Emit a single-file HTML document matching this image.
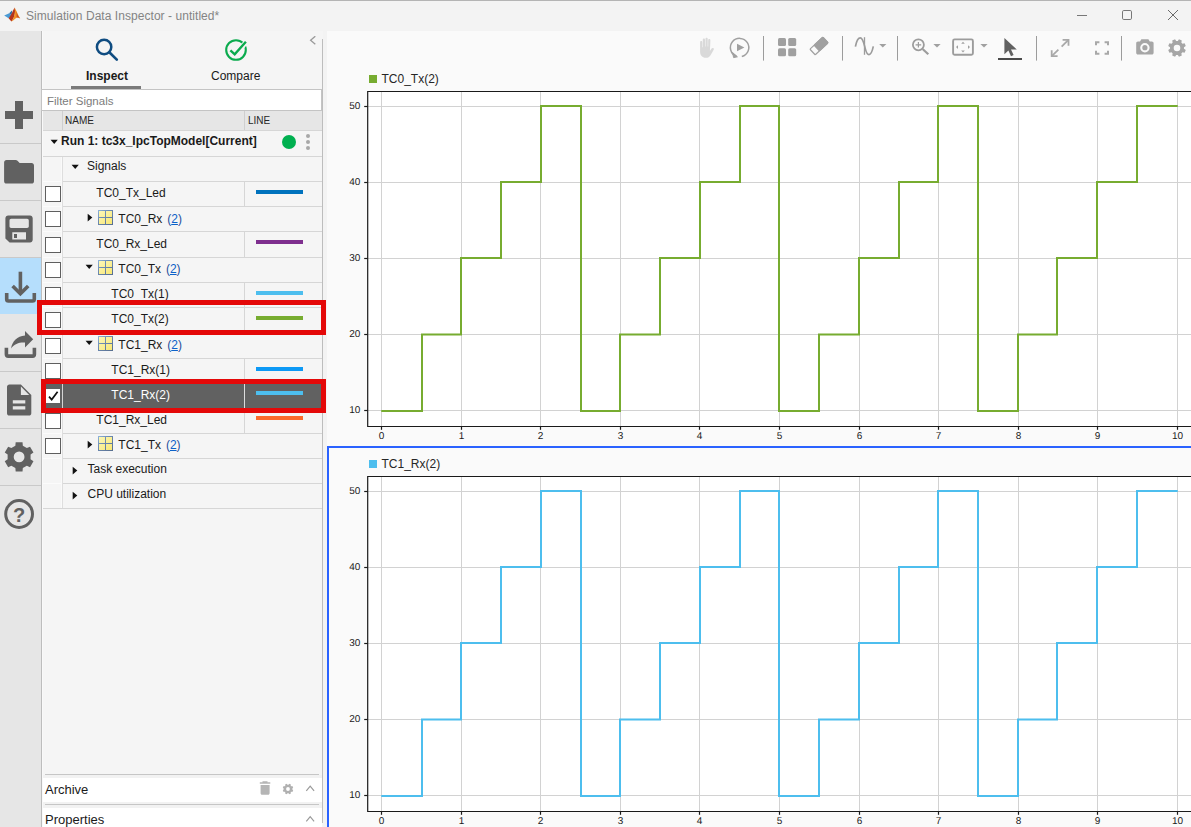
<!DOCTYPE html>
<html lang="en">
<head>
<meta charset="utf-8">
<title>Simulation Data Inspector - untitled*</title>
<style>
html,body{margin:0;padding:0;}
body{width:1191px;height:827px;overflow:hidden;position:relative;background:#fafafa;font-family:"Liberation Sans",Arial,sans-serif;font-size:12px;color:#1a1a1a;}
.abs{position:absolute;}
#titlebar{left:0;top:0;width:1191px;height:31px;background:#f3f3f3;}
#topline{left:0;top:0;width:1191px;height:1px;background:#b4b4b4;}
#title{left:26px;top:9px;font-size:12px;line-height:15px;color:#848484;white-space:nowrap;letter-spacing:0.050px;}
#sidebar{left:0;top:31px;width:41px;height:796px;background:#e6e6e6;}
.sbsep{left:0;width:41px;height:1px;background:#c9c9c9;}
#sbsel{left:0;top:258px;width:41px;height:56px;background:#b5defc;}
#panel{left:42px;top:31px;width:281px;height:796px;background:#f5f5f5;}
#pl{left:41px;top:31px;width:1px;height:796px;background:#bdbdbd;}
#pl2{left:42px;top:31px;width:1px;height:796px;background:#f9f9f9;}
#pr{left:322px;top:39px;width:1px;height:784px;background:#bdbdbd;}
#gap{left:323px;top:31px;width:4px;height:796px;background:#f3f3f3;}
.tab{font-size:12px;line-height:14px;white-space:nowrap;color:#1a1a1a;}
#filter{left:41px;top:89px;width:279px;height:20px;border:1px solid #c4c4c4;background:#fff;}
#filter span{position:absolute;left:5px;top:4px;font-size:11.500px;line-height:14px;color:#7c7c7c;}
#hdr{left:43px;top:111px;width:279px;height:19px;background:#e6e6e6;}
.hl{height:1px;background:#d6d6d6;}
.vl{width:1px;background:#d6d6d6;}
.rt{font-size:12px;line-height:14px;white-space:nowrap;color:#1a1a1a;}
.cb{left:45px;width:14px;height:14px;border:1px solid #5f5f5f;background:#fff;}
.ln{left:256px;width:47px;height:4px;}
.lnk{color:#1f4e9c;}
.lnk u{color:#0b61c9;}
.gi{left:0;top:0;}
.tk{font-family:"Liberation Sans",Arial,sans-serif;font-size:10px;fill:#1a1a1a;text-rendering:geometricPrecision;}
.lg{font-family:"Liberation Sans",Arial,sans-serif;font-size:12px;fill:#262626;}
.red{border:5px solid #e40808;box-sizing:border-box;}
.hd10{font-size:10px;line-height:12px;color:#262626;}
.sec{font-size:13px;line-height:15px;color:#1a1a1a;}
</style>
</head>
<body>
<!-- title bar -->
<div id="titlebar" class="abs"></div>
<div id="topline" class="abs"></div>
<svg class="abs" style="left:4px;top:7px" width="17" height="16" viewBox="0 0 17 16">
  <path d="M0.2 8.6 L5.2 6.3 L7.6 8.4 L4.6 11.2 Z" fill="#4a9ad4"/>
  <path d="M5.2 6.3 L8.2 3.2 L7.6 8.4 Z" fill="#2c6fa8"/>
  <path d="M4.6 11.2 C7.2 8.6 8.6 4.2 10.6 0.6 C11.2 3.6 11.8 9.2 7.4 14.6 Z" fill="#b5351c"/>
  <path d="M10.6 0.6 C12.4 3.2 14 8.6 16.2 11.4 C14.6 10.6 13.4 10.2 12.2 11 C10.8 12 9.4 13.6 7.4 14.6 C11 10 11.4 4.6 10.6 0.6 Z" fill="#f29222"/>
  <path d="M12.2 4 C13.2 7 14.4 9.6 16.2 11.4 C14.8 10.6 13.6 10.2 12.6 10.6 C12.8 8.4 12.6 6 12.2 4 Z" fill="#c8502a"/>
</svg>
<div id="title" class="abs">Simulation Data Inspector - untitled*</div>
<svg class="abs" style="left:1070px;top:4px" width="121" height="24" viewBox="0 0 121 24">
  <path d="M7 11.5H17" stroke="#777" stroke-width="1" fill="none"/>
  <rect x="52.5" y="6.5" width="9" height="9" rx="1.3" fill="none" stroke="#777" stroke-width="1"/>
  <path d="M98 6L108 16M108 6L98 16" stroke="#6a6a6a" stroke-width="1" fill="none"/>
</svg>

<!-- sidebar -->
<div id="sidebar" class="abs"></div>
<div id="sbsel" class="abs"></div>
<div class="abs sbsep" style="top:143px"></div>
<div class="abs sbsep" style="top:200px"></div>
<div class="abs sbsep" style="top:257px"></div>
<div class="abs sbsep" style="top:371px"></div>
<div class="abs sbsep" style="top:428px"></div>
<div class="abs sbsep" style="top:485px"></div>
<svg class="abs" style="left:0;top:86px" width="41" height="470" viewBox="0 86 41 470">
  <g fill="#616161">
  <!-- plus -->
  <rect x="5" y="111" width="28" height="8"/><rect x="15" y="101" width="8" height="28"/>
  <!-- folder -->
  <path d="M6.5 160H15.6C16.4 160 17 160.3 17.5 160.8L19.6 163H31.6C33 163 34 164 34 165.4V181.2C34 182.6 33 183.6 31.6 183.6H6.5C5.1 183.6 4.1 182.6 4.1 181.2V162.4C4.1 161 5.1 160 6.5 160Z"/>
  <!-- save -->
  <path fill-rule="evenodd" d="M8.2 215.5H30C31.5 215.500 32.700 216.700 32.700 218.200V239.800C32.700 241.300 31.500 242.500 30 242.500H9.6L5.400 238.500V218.200C5.400 216.700 6.600 215.500 8.200 215.500ZM11.200 218.800C10.200 218.800 9.500 219.500 9.500 220.500V226.200C9.500 227.200 10.200 227.900 11.200 227.900H27.100C28.100 227.900 28.800 227.200 28.800 226.200V220.500C28.800 219.500 28.100 218.800 27.100 218.800ZM12.300 232.300V239.400H26V232.300ZM14 234H17V237.900H14Z"/>
  <!-- doc -->
  <path fill-rule="evenodd" d="M9.400 384.400H20.900L31.300 395V413.200C31.300 414.600 30.300 415.600 28.900 415.600H9.400C8 415.600 7 414.600 7 413.200V386.800C7 385.400 8 384.400 9.400 384.400ZM20.900 386.600V395H29.200ZM12.800 400.200V403.400H25.300V400.200ZM12.800 406.200V409.600H25.300V406.200Z"/>
  </g>
  <!-- download -->
  <g fill="none" stroke="#616161" stroke-width="3.6">
   <path d="M20.400 271.700V293"/>
   <path d="M12.600 286L20.400 293.800L28.200 286" stroke-linejoin="miter"/>
   <path d="M6.700 293V299.200C6.700 300.300 7.500 301 8.500 301H32.500C33.500 301 34.300 300.300 34.300 299.200V293"/>
   <!-- share tray -->
   <path d="M6.400 347.700V354.300C6.400 355.400 7.200 356.100 8.200 356.100H32.600C33.600 356.100 34.400 355.400 34.400 354.300V347.700"/>
  </g>
  <!-- share arrow -->
  <path fill="#616161" d="M25 331L33.200 339.200L25 347.400V342.600C19 342.200 14.600 344 11 348.600C12.400 341.200 17 336.400 25 335.600Z"/>
  <!-- gear -->
  <g transform="translate(19.100 456.900)">
   <path fill="#616161" fill-rule="evenodd" d="M3.73 11.09 L3.43 14.60 L-3.43 14.60 L-3.73 11.09 L-7.74 8.78 L-10.93 10.27 L-14.36 4.34 L-11.47 2.31 L-11.47 -2.31 L-14.36 -4.34 L-10.93 -10.27 L-7.74 -8.78 L-3.73 -11.09 L-3.43 -14.60 L3.43 -14.60 L3.73 -11.09 L7.74 -8.78 L10.93 -10.27 L14.36 -4.34 L11.47 -2.31 L11.47 2.31 L14.36 4.34 L10.93 10.27 L7.74 8.78Z M5.40 0A5.40 5.40 0 1 0 -5.40 0A5.40 5.40 0 1 0 5.40 0Z"/>
  </g>
  <!-- help -->
  <circle cx="19.100" cy="514" r="13.400" fill="none" stroke="#616161" stroke-width="3"/>
  <text x="19.100" y="521.500" text-anchor="middle" font-family="Liberation Sans,Arial,sans-serif" font-weight="bold" font-size="20" fill="#616161">?</text>
</svg>

<!-- panel -->
<div id="panel" class="abs"></div>
<div id="gap" class="abs"></div>
<div id="pl" class="abs"></div>
<div id="pl2" class="abs"></div>
<div id="pr" class="abs"></div>
<svg class="abs" style="left:90px;top:36px" width="240" height="30" viewBox="90 36 240 30">
  <circle cx="104.100" cy="47" r="7.200" fill="none" stroke="#0f4c81" stroke-width="2.500"/>
  <path d="M109.300 52.200L116.800 59.600" stroke="#0f4c81" stroke-width="2.700" stroke-linecap="round" fill="none"/>
  <circle cx="236" cy="50" r="9.800" fill="none" stroke="#0bab4e" stroke-width="2.100"/>
  <path d="M239 50.500L246.800 41.200" stroke="#f5f5f5" stroke-width="5" fill="none"/>
  <path d="M230.400 50.400L234.700 54.300L245.900 41.700" stroke="#0bab4e" stroke-width="2.400" fill="none"/>
  <path d="M315.300 36.200L310.600 40.200L315.300 44.200" stroke="#9a9a9a" stroke-width="1.300" fill="none"/>
</svg>
<div class="abs tab" style="left:86px;top:69px;font-weight:bold">Inspect</div>
<div class="abs tab" style="left:211px;top:69px">Compare</div>
<div class="abs" style="left:71px;top:86px;width:70px;height:3px;background:#7a7a7a"></div>
<div id="filter" class="abs"><span>Filter Signals</span></div>
<div id="hdr" class="abs"></div>
<div class="abs vl" style="left:62px;top:111px;height:19px;background:#cfcfcf"></div>
<div class="abs vl" style="left:244px;top:111px;height:19px;background:#cfcfcf"></div>
<div class="abs hd10" style="left:65px;top:115px">NAME</div>
<div class="abs hd10" style="left:248px;top:115px">LINE</div>
<svg width="0" height="0" style="position:absolute"><defs><linearGradient id="gg" gradientUnits="userSpaceOnUse" x1="0" y1="0" x2="15" y2="15"><stop offset="0" stop-color="#fdf8bc"/><stop offset="1" stop-color="#f8e670"/></linearGradient><linearGradient id="gb" x1="0" y1="0" x2="1" y2="1"><stop offset="0" stop-color="#8fb4dc"/><stop offset="0.350" stop-color="#6f8db4"/><stop offset="1" stop-color="#566d8e"/></linearGradient><symbol id="gi" viewBox="0 0 16 16"><rect x="0" y="0" width="15" height="15" fill="url(#gb)"/><rect x="1" y="1" width="6" height="6" fill="url(#gg)"/><rect x="8" y="1" width="6" height="6" fill="url(#gg)"/><rect x="1" y="8" width="6" height="6" fill="url(#gg)"/><rect x="8" y="8" width="6" height="6" fill="url(#gg)"/></symbol><symbol id="ad" viewBox="0 0 9 6"><path d="M0.600 0.800H7.800L4.200 5Z" fill="#111"/></symbol><symbol id="ar" viewBox="0 0 6 10"><path d="M0.700 0.800V8.400L5.300 4.600Z" fill="#111"/></symbol></defs></svg>
<div class="abs" style="left:43px;top:384px;width:279px;height:24px;background:#616161"></div>
<div class="abs hl" style="left:43px;top:130px;width:279px"></div>
<div class="abs hl" style="left:43px;top:156px;width:279px"></div>
<div class="abs hl" style="left:43px;top:181px;width:19px;background:#fbfbfb"></div>
<div class="abs hl" style="left:62px;top:181px;width:260px"></div>
<div class="abs hl" style="left:43px;top:206px;width:19px;background:#fbfbfb"></div>
<div class="abs hl" style="left:62px;top:206px;width:260px"></div>
<div class="abs hl" style="left:43px;top:231px;width:19px;background:#fbfbfb"></div>
<div class="abs hl" style="left:62px;top:231px;width:260px"></div>
<div class="abs hl" style="left:43px;top:257px;width:19px;background:#fbfbfb"></div>
<div class="abs hl" style="left:62px;top:257px;width:260px"></div>
<div class="abs hl" style="left:43px;top:282px;width:19px;background:#fbfbfb"></div>
<div class="abs hl" style="left:62px;top:282px;width:260px"></div>
<div class="abs hl" style="left:43px;top:307px;width:19px;background:#fbfbfb"></div>
<div class="abs hl" style="left:62px;top:307px;width:260px"></div>
<div class="abs hl" style="left:43px;top:332px;width:19px;background:#fbfbfb"></div>
<div class="abs hl" style="left:62px;top:332px;width:260px"></div>
<div class="abs hl" style="left:43px;top:358px;width:19px;background:#fbfbfb"></div>
<div class="abs hl" style="left:62px;top:358px;width:260px"></div>
<div class="abs hl" style="left:43px;top:383px;width:19px;background:#fbfbfb"></div>
<div class="abs hl" style="left:62px;top:383px;width:260px"></div>
<div class="abs hl" style="left:43px;top:408px;width:19px;background:#fbfbfb"></div>
<div class="abs hl" style="left:62px;top:408px;width:260px"></div>
<div class="abs hl" style="left:43px;top:433px;width:19px;background:#fbfbfb"></div>
<div class="abs hl" style="left:62px;top:433px;width:260px"></div>
<div class="abs hl" style="left:43px;top:458px;width:19px;background:#fbfbfb"></div>
<div class="abs hl" style="left:62px;top:458px;width:260px"></div>
<div class="abs hl" style="left:43px;top:483px;width:19px;background:#fbfbfb"></div>
<div class="abs hl" style="left:62px;top:483px;width:260px"></div>
<div class="abs hl" style="left:43px;top:508px;width:279px"></div>
<div class="abs vl" style="left:61px;top:157px;height:351px;background:#fafafa"></div>
<div class="abs vl" style="left:62px;top:157px;height:351px;background:#dedede"></div>
<div class="abs vl" style="left:61px;top:384px;height:24px;background:#616161"></div>
<div class="abs vl" style="left:62px;top:384px;height:24px;background:#d4d4d4"></div>
<svg class="abs" style="left:49.5px;top:139px" width="9" height="6"><use href="#ad"/></svg>
<div class="abs rt" style="left:61px;top:134px;font-weight:bold">Run 1: tc3x_IpcTopModel[Current]</div>
<div class="abs" style="left:282px;top:135px;width:14px;height:14px;border-radius:7px;background:#00b050"></div>
<div class="abs" style="left:306px;top:134px;width:4px;height:4px;border-radius:2px;background:#a8a8a8"></div>
<div class="abs" style="left:306px;top:140px;width:4px;height:4px;border-radius:2px;background:#a8a8a8"></div>
<div class="abs" style="left:306px;top:146px;width:4px;height:4px;border-radius:2px;background:#a8a8a8"></div>
<svg class="abs" style="left:70.6px;top:164px" width="9" height="6"><use href="#ad"/></svg>
<div class="abs rt" style="left:87px;top:159px;">Signals</div>
<div class="abs cb" style="top:186px"></div>
<div class="abs rt" style="left:96.3px;top:186px;">TC0_Tx_Led</div>
<div class="abs ln" style="top:190px;background:#0072bd"></div>
<div class="abs vl" style="left:244px;top:182px;height:24px"></div>
<div class="abs cb" style="top:211px"></div>
<svg class="abs" style="left:86.8px;top:213px" width="6" height="10"><use href="#ar"/></svg>
<svg class="abs" style="left:98px;top:210px" width="16" height="16"><use href="#gi"/></svg>
<div class="abs rt" style="left:118.3px;top:212px;">TC0_Rx&nbsp;<span class="lnk" style="margin-left:1.600px">(<u>2</u>)</span></div>
<div class="abs cb" style="top:237px"></div>
<div class="abs rt" style="left:96.3px;top:237px;">TC0_Rx_Led</div>
<div class="abs ln" style="top:240px;background:#7e2f8e"></div>
<div class="abs vl" style="left:244px;top:232px;height:25px"></div>
<div class="abs cb" style="top:262px"></div>
<svg class="abs" style="left:85.4px;top:264px" width="9" height="6"><use href="#ad"/></svg>
<svg class="abs" style="left:98px;top:260px" width="16" height="16"><use href="#gi"/></svg>
<div class="abs rt" style="left:118.3px;top:262px;">TC0_Tx&nbsp;<span class="lnk" style="margin-left:1.600px">(<u>2</u>)</span></div>
<div class="abs cb" style="top:287px"></div>
<div class="abs rt" style="left:111.3px;top:287px;">TC0_Tx(1)</div>
<div class="abs ln" style="top:291px;background:#4dbeee"></div>
<div class="abs vl" style="left:244px;top:283px;height:24px"></div>
<div class="abs cb" style="top:312px"></div>
<div class="abs rt" style="left:111.3px;top:312px;">TC0_Tx(2)</div>
<div class="abs ln" style="top:316px;background:#77ac30"></div>
<div class="abs vl" style="left:244px;top:308px;height:24px"></div>
<div class="abs cb" style="top:338px"></div>
<svg class="abs" style="left:85.4px;top:340px" width="9" height="6"><use href="#ad"/></svg>
<svg class="abs" style="left:98px;top:336px" width="16" height="16"><use href="#gi"/></svg>
<div class="abs rt" style="left:118.3px;top:338px;">TC1_Rx&nbsp;<span class="lnk" style="margin-left:1.600px">(<u>2</u>)</span></div>
<div class="abs cb" style="top:363px"></div>
<div class="abs rt" style="left:111.3px;top:363px;">TC1_Rx(1)</div>
<div class="abs ln" style="top:367px;background:#0d99f5"></div>
<div class="abs vl" style="left:244px;top:359px;height:24px"></div>
<div class="abs" style="left:46px;top:389px;width:14px;height:14px;background:#fff"></div>
<svg class="abs" style="left:45px;top:389px" width="16" height="16" viewBox="0 0 16 16"><path d="M4 7.600L6.700 10.600L12.600 2.800" stroke="#111" stroke-width="1.700" fill="none"/></svg>
<div class="abs rt" style="left:111.3px;top:388px;color:#fff">TC1_Rx(2)</div>
<div class="abs ln" style="top:391px;background:#4dbeee"></div>
<div class="abs vl" style="left:244px;top:384px;height:24px;background:#dcdcdc"></div>
<div class="abs cb" style="top:413px"></div>
<div class="abs rt" style="left:96.3px;top:413px;">TC1_Rx_Led</div>
<div class="abs ln" style="top:416px;background:#fb6a2c"></div>
<div class="abs vl" style="left:244px;top:409px;height:24px"></div>
<div class="abs cb" style="top:438px"></div>
<svg class="abs" style="left:86.8px;top:440px" width="6" height="10"><use href="#ar"/></svg>
<svg class="abs" style="left:98px;top:436px" width="16" height="16"><use href="#gi"/></svg>
<div class="abs rt" style="left:118.3px;top:438px;">TC1_Tx&nbsp;<span class="lnk" style="margin-left:1.600px">(<u>2</u>)</span></div>
<svg class="abs" style="left:72.2px;top:466px" width="6" height="10"><use href="#ar"/></svg>
<div class="abs rt" style="left:87.5px;top:462px;">Task execution</div>
<svg class="abs" style="left:72.2px;top:491px" width="6" height="10"><use href="#ar"/></svg>
<div class="abs rt" style="left:87.5px;top:487px;">CPU utilization</div>
<div class="abs" style="left:43px;top:775px;width:279px;height:3px;background:#f2f2f2"></div>
<div class="abs" style="left:43px;top:778px;width:279px;height:24px;background:#fff"></div>
<div class="abs" style="left:43px;top:802px;width:279px;height:6px;background:#f2f2f2"></div>
<div class="abs" style="left:43px;top:808px;width:279px;height:19px;background:#fff"></div>
<div class="abs" style="left:45px;top:774px;width:274px;height:1px;background:#c6c6c6"></div>
<div class="abs" style="left:45px;top:804px;width:274px;height:1px;background:#c6c6c6"></div>
<div class="abs sec" style="left:45px;top:782px">Archive</div>
<div class="abs sec" style="left:45px;top:812px">Properties</div>
<svg class="abs" style="left:255px;top:778px" width="66" height="49" viewBox="255 778 66 49">
  <path d="M262.500 781.200H267.500V782.200H270.300V783.800H259.800V782.200H262.500Z M260.600 785H269.600V793.200C269.600 794.100 269 794.700 268.100 794.700H262.100C261.200 794.700 260.600 794.100 260.600 793.200Z" fill="#b5b5b5"/>
  <g transform="translate(288 789)"><path fill="#b0b0b0" fill-rule="evenodd" d="M4.09 0.32 L5.20 1.03 L4.41 2.94 L3.12 2.66 L2.66 3.12 L2.94 4.41 L1.03 5.20 L0.32 4.09 L-0.32 4.09 L-1.03 5.20 L-2.94 4.41 L-2.66 3.12 L-3.12 2.66 L-4.41 2.94 L-5.20 1.03 L-4.09 0.32 L-4.09 -0.32 L-5.20 -1.03 L-4.41 -2.94 L-3.12 -2.66 L-2.66 -3.12 L-2.94 -4.41 L-1.03 -5.20 L-0.32 -4.09 L0.32 -4.09 L1.03 -5.20 L2.94 -4.41 L2.66 -3.12 L3.12 -2.66 L4.41 -2.94 L5.20 -1.03 L4.09 -0.32Z M1.90 0A1.90 1.90 0 1 0 -1.90 0A1.90 1.90 0 1 0 1.90 0Z"/></g>
  <path d="M306.300 790.800L310.200 786.200L314.100 790.800" stroke="#9a9a9a" stroke-width="1.200" fill="none"/>
  <path d="M306.300 821.300L310.200 816.700L314.100 821.300" stroke="#9a9a9a" stroke-width="1.200" fill="none"/>
</svg>

<!-- toolbar -->
<svg class="abs" style="left:690px;top:32px" width="501" height="32" viewBox="690 32 501 32">
  <!-- hand (disabled) -->
  <g transform="translate(1412 0) scale(-1 1)"><path fill="#d9d9d9" d="M701.600 40.400c0-.8.500-1.300 1.100-1.300s1.100.5 1.100 1.300v6h.5v-7.400c0-.8.500-1.300 1.100-1.300s1.100.5 1.100 1.300v7.400h.5v-6.600c0-.8.500-1.300 1.100-1.300s1.100.5 1.100 1.300v7.400h.5v-4.800c0-.8.500-1.300 1.100-1.300s1.100.5 1.100 1.300v9.400c0 3.600-2.200 6-5.600 6-2.400 0-3.800-1-5-2.900l-3-5.200c-.4-.7 0-1.400.600-1.600.7-.2 1.300.1 1.700.7l1.500 2.200z"/></g>
  <!-- replay -->
  <g fill="none" stroke="#a0a0a0" stroke-width="1.500">
    <path d="M736.400 56.200A9.200 9.200 0 1 1 741.800 56.500"/>
  </g>
  <path d="M732.600 52.600L737.400 56.800L733.600 57.600Z" fill="#a0a0a0" stroke="#a0a0a0" stroke-width="1" stroke-linejoin="round"/>
  <path d="M737 43.800V51.200L744.400 47.500Z" fill="#a0a0a0"/>
  <!-- separators -->
  <g stroke="#9c9c9c" stroke-width="1">
    <path d="M763.500 36V60.600M842.500 36V60.600M897.500 36V60.600M1036.500 36V60.600M1121.500 36V60.600"/>
  </g>
  <!-- grid layout -->
  <g fill="#a0a0a0">
    <rect x="778" y="38" width="8" height="8" rx="1.500"/><rect x="788.200" y="38" width="8" height="8" rx="1.500"/>
    <rect x="778" y="48.200" width="8" height="8" rx="1.500"/><rect x="788.200" y="48.200" width="8" height="8" rx="1.500"/>
  </g>
  <!-- eraser -->
  <g transform="translate(819 46) rotate(-43)">
    <rect x="-8.800" y="-3.900" width="17.600" height="7.800" rx="0.800" fill="#fafafa" stroke="#a0a0a0" stroke-width="1.200"/>
    <rect x="-3" y="-3.900" width="11.800" height="7.800" rx="0.800" fill="#a0a0a0" stroke="#a0a0a0" stroke-width="1.200"/>
  </g>
  <!-- sine -->
  <g fill="none" stroke="#9c9c9c" stroke-width="1.700">
    <path d="M855.400 46.600C856.600 40.600 858.500 37.900 860.300 37.900C863 37.900 864 44 865.200 48.400C866.200 52.400 867.400 54.600 869 54.600C870.800 54.600 872.300 51.200 873.300 46.400"/>
    <path d="M864.500 37.200V54.800" stroke-width="1.300"/>
  </g>
  <!-- dropdown arrows -->
  <g fill="#a0a0a0">
    <path d="M879.200 44H886.400L882.800 47.600Z"/>
    <path d="M933.400 44H940.600L937 47.600Z"/>
    <path d="M980.400 44H987.600L984 47.600Z"/>
  </g>
  <!-- zoom -->
  <g fill="none" stroke="#9c9c9c">
    <circle cx="918.400" cy="44.800" r="5.500" stroke-width="1.800"/>
    <path d="M922.600 49L928.300 54.300" stroke-width="2.200"/>
    <path d="M915.600 44.800H921.200M918.400 42V47.600" stroke-width="1.200"/>
  </g>
  <!-- fit -->
  <rect x="953.100" y="39.400" width="19.800" height="15.400" rx="1.500" fill="none" stroke="#9c9c9c" stroke-width="1.900"/>
  <g fill="#a0a0a0">
    <path d="M961.200 43.800H964.800L963 41.800Z"/><path d="M961.200 50.600H964.800L963 52.600Z"/>
    <path d="M958 45.300V48.900L956 47.100Z"/><path d="M968 45.300V48.900L970 47.100Z"/>
  </g>
  <!-- cursor -->
  <path d="M1004.400 38V54.200L1008.400 50.600L1011 56.200L1013.600 55L1011 49.600H1016.800Z" fill="#616161"/>
  <rect x="998" y="58" width="24" height="2" fill="#4a4a4a"/>
  <!-- expand -->
  <g fill="none" stroke="#a8a8a8" stroke-width="1.800">
    <path d="M1061.600 46.600L1068.200 40.200"/>
    <path d="M1062.600 39.900H1068.500V45.800"/>
    <path d="M1058.400 49.600L1052 55.800"/>
    <path d="M1051.700 50.200V56.100H1057.600"/>
  </g>
  <!-- fullscreen -->
  <g fill="none" stroke="#a8a8a8" stroke-width="2">
    <path d="M1096 45.200V42.200H1099.400"/><path d="M1104.600 42.200H1108V45.200"/>
    <path d="M1096 50.800V53.800H1099.400"/><path d="M1104.600 53.800H1108V50.800"/>
  </g>
  <!-- camera -->
  <path fill-rule="evenodd" fill="#a6a6a6" d="M1141.400 39.200H1148.400L1149.800 41.400H1151.800C1152.900 41.400 1153.600 42.100 1153.600 43.200V52.800C1153.600 53.900 1152.900 54.600 1151.800 54.600H1138C1136.900 54.600 1136.200 53.900 1136.200 52.800V43.200C1136.200 42.100 1136.900 41.400 1138 41.400H1140ZM1144.900 43A4.700 4.700 0 1 0 1144.900 52.400A4.700 4.700 0 1 0 1144.900 43ZM1144.900 45.100A2.600 2.600 0 1 1 1144.900 50.300A2.600 2.600 0 1 1 1144.900 45.100Z"/>
  <!-- gear -->
  <g transform="translate(1177 48)"><path fill="#a6a6a6" fill-rule="evenodd" d="M6.95 0.82 L8.78 1.96 L7.60 4.82 L5.50 4.33 L4.33 5.50 L4.82 7.60 L1.96 8.78 L0.82 6.95 L-0.82 6.95 L-1.96 8.78 L-4.82 7.60 L-4.33 5.50 L-5.50 4.33 L-7.60 4.82 L-8.78 1.96 L-6.95 0.82 L-6.95 -0.82 L-8.78 -1.96 L-7.60 -4.82 L-5.50 -4.33 L-4.33 -5.50 L-4.82 -7.60 L-1.96 -8.78 L-0.82 -6.95 L0.82 -6.95 L1.96 -8.78 L4.82 -7.60 L4.33 -5.50 L5.50 -4.33 L7.60 -4.82 L8.78 -1.96 L6.95 -0.82Z M3.30 0A3.30 3.30 0 1 0 -3.30 0A3.30 3.30 0 1 0 3.30 0Z"/></g>
</svg>

<!-- charts -->
<svg class="abs" style="left:0;top:0" width="1191" height="827" viewBox="0 0 1191 827">
<rect x="367.7" y="91.5" width="830" height="335.0" fill="#fff"/>
<path d="M381.5 91.5V426.5" stroke="#d2d2d2" stroke-width="1"/>
<path d="M461.5 91.5V426.5" stroke="#d2d2d2" stroke-width="1"/>
<path d="M540.5 91.5V426.5" stroke="#d2d2d2" stroke-width="1"/>
<path d="M620.5 91.5V426.5" stroke="#d2d2d2" stroke-width="1"/>
<path d="M699.5 91.5V426.5" stroke="#d2d2d2" stroke-width="1"/>
<path d="M779.5 91.5V426.5" stroke="#d2d2d2" stroke-width="1"/>
<path d="M859.5 91.5V426.5" stroke="#d2d2d2" stroke-width="1"/>
<path d="M938.5 91.5V426.5" stroke="#d2d2d2" stroke-width="1"/>
<path d="M1018.5 91.5V426.5" stroke="#d2d2d2" stroke-width="1"/>
<path d="M1097.5 91.5V426.5" stroke="#d2d2d2" stroke-width="1"/>
<path d="M1177.5 91.5V426.5" stroke="#d2d2d2" stroke-width="1"/>
<path d="M367.7 106.5H1200" stroke="#d2d2d2" stroke-width="1"/>
<path d="M367.7 182.5H1200" stroke="#d2d2d2" stroke-width="1"/>
<path d="M367.7 258.5H1200" stroke="#d2d2d2" stroke-width="1"/>
<path d="M367.7 334.5H1200" stroke="#d2d2d2" stroke-width="1"/>
<path d="M367.7 410.5H1200" stroke="#d2d2d2" stroke-width="1"/>
<path d="M382 411.0 H422 V334.5 H461 V258.0 H501 V182.0 H541 V106.0 H581 V411.0 H620 V334.5 H660 V258.0 H700 V182.0 H740 V106.0 H779 V411.0 H819 V334.5 H859 V258.0 H899 V182.0 H938 V106.0 H978 V411.0 H1018 V334.5 H1057 V258.0 H1097 V182.0 H1137 V106.0 H1177" fill="none" stroke="#77ac30" stroke-width="2" stroke-linejoin="miter" stroke-linecap="round"/>
<path d="M1200 91.5H367.7V426.5H1200" fill="none" stroke="#1a1a1a" stroke-width="1.2"/>
<path d="M381.5 426.5v3.3" stroke="#1a1a1a" stroke-width="1.2"/>
<text x="381.5" y="439.1" text-anchor="middle" class="tk">0</text>
<path d="M461.5 426.5v3.3" stroke="#1a1a1a" stroke-width="1.2"/>
<text x="461.5" y="439.1" text-anchor="middle" class="tk">1</text>
<path d="M540.5 426.5v3.3" stroke="#1a1a1a" stroke-width="1.2"/>
<text x="540.5" y="439.1" text-anchor="middle" class="tk">2</text>
<path d="M620.5 426.5v3.3" stroke="#1a1a1a" stroke-width="1.2"/>
<text x="620.5" y="439.1" text-anchor="middle" class="tk">3</text>
<path d="M699.5 426.5v3.3" stroke="#1a1a1a" stroke-width="1.2"/>
<text x="699.5" y="439.1" text-anchor="middle" class="tk">4</text>
<path d="M779.5 426.5v3.3" stroke="#1a1a1a" stroke-width="1.2"/>
<text x="779.5" y="439.1" text-anchor="middle" class="tk">5</text>
<path d="M859.5 426.5v3.3" stroke="#1a1a1a" stroke-width="1.2"/>
<text x="859.5" y="439.1" text-anchor="middle" class="tk">6</text>
<path d="M938.5 426.5v3.3" stroke="#1a1a1a" stroke-width="1.2"/>
<text x="938.5" y="439.1" text-anchor="middle" class="tk">7</text>
<path d="M1018.5 426.5v3.3" stroke="#1a1a1a" stroke-width="1.2"/>
<text x="1018.5" y="439.1" text-anchor="middle" class="tk">8</text>
<path d="M1097.5 426.5v3.3" stroke="#1a1a1a" stroke-width="1.2"/>
<text x="1097.5" y="439.1" text-anchor="middle" class="tk">9</text>
<path d="M1177.5 426.5v3.3" stroke="#1a1a1a" stroke-width="1.2"/>
<text x="1177.5" y="439.1" text-anchor="middle" class="tk">10</text>
<path d="M367.7 106.5h-3.5" stroke="#1a1a1a" stroke-width="1.2"/>
<text x="360.4" y="109.3" text-anchor="end" class="tk">50</text>
<path d="M367.7 182.5h-3.5" stroke="#1a1a1a" stroke-width="1.2"/>
<text x="360.4" y="185.3" text-anchor="end" class="tk">40</text>
<path d="M367.7 258.5h-3.5" stroke="#1a1a1a" stroke-width="1.2"/>
<text x="360.4" y="261.3" text-anchor="end" class="tk">30</text>
<path d="M367.7 334.5h-3.5" stroke="#1a1a1a" stroke-width="1.2"/>
<text x="360.4" y="337.3" text-anchor="end" class="tk">20</text>
<path d="M367.7 410.5h-3.5" stroke="#1a1a1a" stroke-width="1.2"/>
<text x="360.4" y="413.3" text-anchor="end" class="tk">10</text>
<rect x="369" y="75" width="8" height="8" fill="#77ac30"/>
<text x="381.5" y="82.8" class="lg">TC0_Tx(2)</text>
<rect x="367.7" y="476.5" width="830" height="335.0" fill="#fff"/>
<path d="M381.5 476.5V811.5" stroke="#d2d2d2" stroke-width="1"/>
<path d="M461.5 476.5V811.5" stroke="#d2d2d2" stroke-width="1"/>
<path d="M540.5 476.5V811.5" stroke="#d2d2d2" stroke-width="1"/>
<path d="M620.5 476.5V811.5" stroke="#d2d2d2" stroke-width="1"/>
<path d="M699.5 476.5V811.5" stroke="#d2d2d2" stroke-width="1"/>
<path d="M779.5 476.5V811.5" stroke="#d2d2d2" stroke-width="1"/>
<path d="M859.5 476.5V811.5" stroke="#d2d2d2" stroke-width="1"/>
<path d="M938.5 476.5V811.5" stroke="#d2d2d2" stroke-width="1"/>
<path d="M1018.5 476.5V811.5" stroke="#d2d2d2" stroke-width="1"/>
<path d="M1097.5 476.5V811.5" stroke="#d2d2d2" stroke-width="1"/>
<path d="M1177.5 476.5V811.5" stroke="#d2d2d2" stroke-width="1"/>
<path d="M367.7 491.5H1200" stroke="#d2d2d2" stroke-width="1"/>
<path d="M367.7 567.5H1200" stroke="#d2d2d2" stroke-width="1"/>
<path d="M367.7 643.5H1200" stroke="#d2d2d2" stroke-width="1"/>
<path d="M367.7 719.5H1200" stroke="#d2d2d2" stroke-width="1"/>
<path d="M367.7 795.5H1200" stroke="#d2d2d2" stroke-width="1"/>
<path d="M382 796.0 H422 V719.5 H461 V643.0 H501 V567.0 H541 V491.0 H581 V796.0 H620 V719.5 H660 V643.0 H700 V567.0 H740 V491.0 H779 V796.0 H819 V719.5 H859 V643.0 H899 V567.0 H938 V491.0 H978 V796.0 H1018 V719.5 H1057 V643.0 H1097 V567.0 H1137 V491.0 H1177" fill="none" stroke="#4dbeee" stroke-width="2" stroke-linejoin="miter" stroke-linecap="round"/>
<path d="M1200 476.5H367.7V811.5H1200" fill="none" stroke="#1a1a1a" stroke-width="1.2"/>
<path d="M381.5 811.5v3.3" stroke="#1a1a1a" stroke-width="1.2"/>
<text x="381.5" y="824.1" text-anchor="middle" class="tk">0</text>
<path d="M461.5 811.5v3.3" stroke="#1a1a1a" stroke-width="1.2"/>
<text x="461.5" y="824.1" text-anchor="middle" class="tk">1</text>
<path d="M540.5 811.5v3.3" stroke="#1a1a1a" stroke-width="1.2"/>
<text x="540.5" y="824.1" text-anchor="middle" class="tk">2</text>
<path d="M620.5 811.5v3.3" stroke="#1a1a1a" stroke-width="1.2"/>
<text x="620.5" y="824.1" text-anchor="middle" class="tk">3</text>
<path d="M699.5 811.5v3.3" stroke="#1a1a1a" stroke-width="1.2"/>
<text x="699.5" y="824.1" text-anchor="middle" class="tk">4</text>
<path d="M779.5 811.5v3.3" stroke="#1a1a1a" stroke-width="1.2"/>
<text x="779.5" y="824.1" text-anchor="middle" class="tk">5</text>
<path d="M859.5 811.5v3.3" stroke="#1a1a1a" stroke-width="1.2"/>
<text x="859.5" y="824.1" text-anchor="middle" class="tk">6</text>
<path d="M938.5 811.5v3.3" stroke="#1a1a1a" stroke-width="1.2"/>
<text x="938.5" y="824.1" text-anchor="middle" class="tk">7</text>
<path d="M1018.5 811.5v3.3" stroke="#1a1a1a" stroke-width="1.2"/>
<text x="1018.5" y="824.1" text-anchor="middle" class="tk">8</text>
<path d="M1097.5 811.5v3.3" stroke="#1a1a1a" stroke-width="1.2"/>
<text x="1097.5" y="824.1" text-anchor="middle" class="tk">9</text>
<path d="M1177.5 811.5v3.3" stroke="#1a1a1a" stroke-width="1.2"/>
<text x="1177.5" y="824.1" text-anchor="middle" class="tk">10</text>
<path d="M367.7 491.5h-3.5" stroke="#1a1a1a" stroke-width="1.2"/>
<text x="360.4" y="494.3" text-anchor="end" class="tk">50</text>
<path d="M367.7 567.5h-3.5" stroke="#1a1a1a" stroke-width="1.2"/>
<text x="360.4" y="570.3" text-anchor="end" class="tk">40</text>
<path d="M367.7 643.5h-3.5" stroke="#1a1a1a" stroke-width="1.2"/>
<text x="360.4" y="646.3" text-anchor="end" class="tk">30</text>
<path d="M367.7 719.5h-3.5" stroke="#1a1a1a" stroke-width="1.2"/>
<text x="360.4" y="722.3" text-anchor="end" class="tk">20</text>
<path d="M367.7 795.5h-3.5" stroke="#1a1a1a" stroke-width="1.2"/>
<text x="360.4" y="798.3" text-anchor="end" class="tk">10</text>
<rect x="369" y="460" width="8" height="8" fill="#4dbeee"/>
<text x="381.5" y="467.8" class="lg">TC1_Rx(2)</text>
<path d="M1192 447H328V828" fill="none" stroke="#2a62ff" stroke-width="2"/>
</svg>

<div class="abs red" style="left:37px;top:300px;width:289px;height:35px"></div>
<div class="abs red" style="left:41px;top:379px;width:285px;height:34px"></div>
</body>
</html>
